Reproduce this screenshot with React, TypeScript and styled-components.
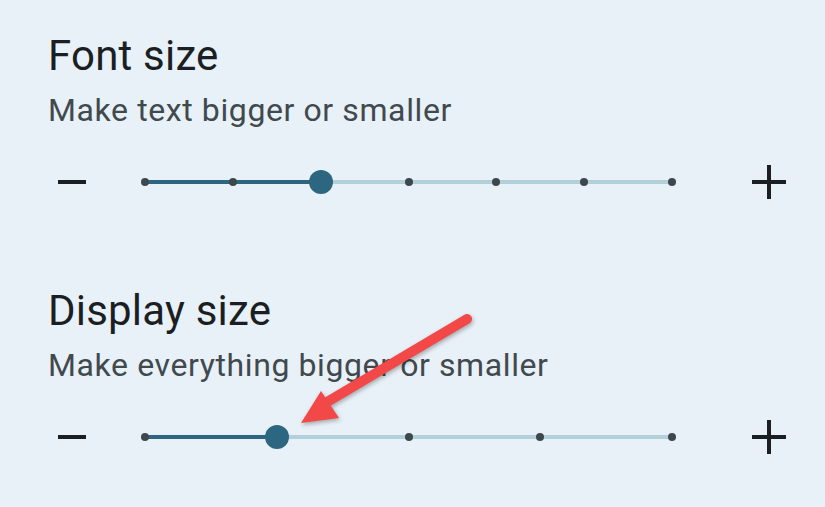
import React from "react";
import styled, { createGlobalStyle } from "styled-components";

const GlobalStyle = createGlobalStyle`
  html, body {
    margin: 0;
    padding: 0;
    background: #e8f1f7;
  }
  body {
    font-family: Roboto, "Noto Sans", "Liberation Sans", sans-serif;
  }
`;

const Page = styled.div`
  position: relative;
  width: 825px;
  height: 507px;
  overflow: hidden;
  background: #e8f1f7;
  padding: 31px 0 0 48px;
  box-sizing: border-box;
`;

const Section = styled.section<{ $gap: number }>`
  display: flex;
  flex-direction: column;
  margin-bottom: ${(p) => p.$gap}px;
`;

const Title = styled.h2`
  margin: 0;
  font-size: 42px;
  font-weight: 400;
  line-height: 50px;
  color: #1b1f23;
  letter-spacing: 0.2px;
`;

const Subtitle = styled.p`
  margin: 9px 0 0;
  font-size: 32px;
  font-weight: 400;
  line-height: 40px;
  color: #41494e;
  letter-spacing: 0.6px;
`;

const Row = styled.div`
  display: grid;
  grid-template-columns: 28px 535px 34px;
  align-items: center;
  height: 48px;
  margin: 28px 0 0 10px;
`;

const Minus = styled.div`
  width: 28px;
  height: 4px;
  background: #1b1f23;
`;

const Plus = styled.div`
  position: relative;
  width: 34px;
  height: 34px;
  margin-left: 131px;
  &::before,
  &::after {
    content: "";
    position: absolute;
    background: #1b1f23;
  }
  &::before {
    left: 0;
    right: 0;
    top: 15px;
    height: 4px;
  }
  &::after {
    top: 0;
    bottom: 0;
    left: 15px;
    width: 4px;
  }
`;

const Track = styled.div`
  position: relative;
  height: 24px;
  margin-left: 55px;
`;

const Rail = styled.div<{ $active?: boolean }>`
  position: absolute;
  top: 10px;
  height: 4px;
  background: ${(p) => (p.$active ? "#2c6680" : "#b2d0da")};
`;

const Tick = styled.span`
  position: absolute;
  top: 8px;
  width: 8px;
  height: 8px;
  margin-left: -4px;
  border-radius: 50%;
  background: #3e474c;
`;

const Thumb = styled.span`
  position: absolute;
  top: 0;
  width: 24px;
  height: 24px;
  margin-left: -12px;
  border-radius: 50%;
  background: #2c6680;
`;

const Arrow = styled.svg`
  position: absolute;
  left: 0;
  top: 0;
  pointer-events: none;
  filter: drop-shadow(1px 2px 2px rgba(0, 0, 0, 0.3));
`;

type SliderProps = { steps: number; value: number };

const Slider = ({ steps, value }: SliderProps) => {
  const inner = 527;
  const at = (i: number) => 4 + (inner * i) / (steps - 1);
  return (
    <Track>
      <Rail style={{ left: 4, width: inner }} />
      <Rail $active style={{ left: 4, width: at(value) - 4 }} />
      {Array.from({ length: steps }).map((_, i) =>
        i === value ? null : <Tick key={i} style={{ left: at(i) }} />
      )}
      <Thumb style={{ left: at(value) }} />
    </Track>
  );
};

const SizeSetting = ({
  title,
  hint,
  steps,
  value,
  gap,
}: {
  title: string;
  hint: string;
  steps: number;
  value: number;
  gap: number;
}) => (
  <Section $gap={gap}>
    <Title>{title}</Title>
    <Subtitle>{hint}</Subtitle>
    <Row>
      <Minus />
      <Slider steps={steps} value={value} />
      <Plus />
    </Row>
  </Section>
);

export default function App() {
  return (
    <>
      <GlobalStyle />
      <Page>
        <SizeSetting
          title="Font size"
          hint="Make text bigger or smaller"
          steps={7}
          value={2}
          gap={80}
        />
        <SizeSetting
          title="Display size"
          hint="Make everything bigger or smaller"
          steps={5}
          value={1}
          gap={0}
        />
        <Arrow width="825" height="507" viewBox="0 0 825 507">
          <line
            x1="467"
            y1="319"
            x2="322"
            y2="405"
            stroke="#f24848"
            strokeWidth="10"
            strokeLinecap="round"
          />
          <polygon points="301,423 321,391 339,418" fill="#f24848" />
        </Arrow>
      </Page>
    </>
  );
}
